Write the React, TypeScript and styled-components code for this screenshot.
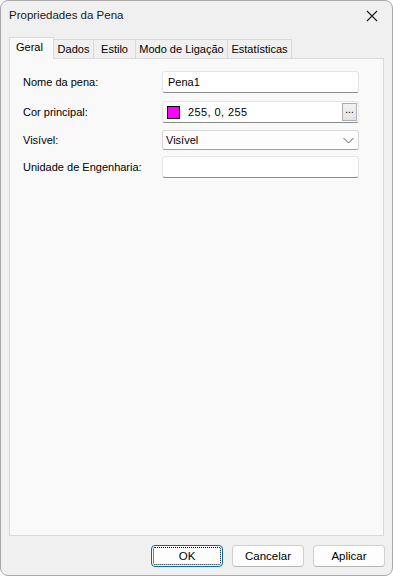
import React, { useState } from 'react';
import styled, { createGlobalStyle, css } from 'styled-components';

const GlobalStyle = createGlobalStyle`
  html, body {
    margin: 0;
    padding: 0;
    background: #ffffff;
  }
  body {
    font-family: 'Liberation Sans', Arial, sans-serif;
    font-size: 11px;
    color: #000000;
  }
`;

const DialogWindow = styled.div`
  box-sizing: border-box;
  width: 393px;
  height: 576px;
  display: flex;
  flex-direction: column;
  background: #f0f0f0;
  border: 1px solid #a8a8a8;
  border-radius: 8px;
  overflow: hidden;
`;

const TitleBar = styled.div`
  height: 29px;
  display: flex;
  align-items: center;
  justify-content: space-between;
  padding: 0 8px 0 8px;
  flex-shrink: 0;
`;

const Title = styled.span`
  font-size: 11.5px;
  color: #1a1a1a;
  margin-top: -1px;
`;

const CloseButton = styled.button`
  width: 20px;
  height: 20px;
  border: none;
  background: transparent;
  padding: 0;
  display: flex;
  align-items: center;
  justify-content: center;
  margin-right: 2px;
`;

const TabStrip = styled.div`
  display: flex;
  align-items: flex-end;
  height: 21px;
  margin: 7px 0 0 8px;
  flex-shrink: 0;
`;

const Tab = styled.div<{ $active?: boolean; $w: number }>`
  box-sizing: border-box;
  width: ${(p) => p.$w}px;
  height: 19px;
  display: flex;
  align-items: center;
  justify-content: center;
  border: 1px solid #d9d9d9;
  border-bottom: none;
  margin-right: -1px;
  background: #f0f0f0;
  color: #000000;
  white-space: nowrap;
  ${(p) =>
    p.$active &&
    css`
      justify-content: flex-start;
      padding: 0 0 3px 6px;
      background: #f9f9f9;
      position: relative;
      z-index: 1;
      margin-bottom: -1px;
      height: 22px;
    `}
`;

const Panel = styled.div`
  flex: 1;
  margin: 0 8px;
  background: #f9f9f9;
  border: 1px solid #d9d9d9;
  padding: 12px 13px 0 13px;
  display: flex;
  flex-direction: column;
`;

const Row = styled.div<{ $height: number; $gap: number }>`
  display: grid;
  grid-template-columns: 139px 197px;
  align-items: center;
  height: ${(p) => p.$height}px;
  margin-bottom: ${(p) => p.$gap}px;
`;

const Label = styled.label`
  color: #000000;
`;

const fieldBase = css`
  box-sizing: border-box;
  height: 100%;
  width: 100%;
  border: 1px solid #e5e5e5;
  border-bottom: 1px solid #8a8a8a;
  border-radius: 3px;
  background: #ffffff;
  display: flex;
  align-items: center;
`;

const TextBox = styled.div`
  ${fieldBase}
  padding: 0 5px;
`;

const ColourBox = styled.div`
  ${fieldBase}
  padding: 0 0 0 4px;
`;

const Swatch = styled.span<{ $colour: string }>`
  box-sizing: border-box;
  width: 13px;
  height: 13px;
  border: 1px solid #000000;
  background: ${(p) => p.$colour};
  margin-right: 8px;
  flex-shrink: 0;
`;

const ColourText = styled.span`
  flex: 1;
  letter-spacing: 0.4px;
`;

const EllipsisButton = styled.button`
  box-sizing: border-box;
  width: 15px;
  height: 18px;
  margin-right: 1px;
  padding: 0 0 4px 0;
  border: 1px solid #adadad;
  background: linear-gradient(#f2f2f2, #e3e3e3);
  font-family: inherit;
  font-size: 10px;
  line-height: 1;
  color: #000;
  display: flex;
  align-items: center;
  justify-content: center;
`;

const SelectBox = styled.div`
  ${fieldBase}
  background: #fdfdfd;
  border: 1px solid #d6d6d6;
  border-bottom: 1px solid #a0a0a0;
  padding: 0 4px 0 3px;
  justify-content: space-between;
`;

const Footer = styled.div`
  height: 38px;
  display: flex;
  align-items: center;
  justify-content: flex-end;
  gap: 9px;
  padding: 1px 7px 0 0;
  flex-shrink: 0;
`;

const DialogButton = styled.button<{ $default?: boolean }>`
  box-sizing: border-box;
  width: 72px;
  height: 22px;
  border: 1px solid #d0d0d0;
  border-bottom-color: #b8b8b8;
  border-radius: 4px;
  background: #fdfdfd;
  font-family: inherit;
  font-size: 11.5px;
  color: #000000;
  padding: 0;
  position: relative;
  ${(p) =>
    p.$default &&
    css`
      border: 1px solid #0067c0;
      &::after {
        content: '';
        position: absolute;
        inset: 1px;
        border: 1px dotted #000000;
        border-radius: 2px;
      }
    `}
`;

const CloseIcon = () => (
  <svg width="12" height="12" viewBox="0 0 12 12">
    <path d="M1 1 L11 11 M11 1 L1 11" stroke="#1a1a1a" strokeWidth="1.1" fill="none" />
  </svg>
);

const Chevron = () => (
  <svg width="11" height="7" viewBox="0 0 11 7">
    <path d="M0.5 1 L5.5 6 L10.5 1" stroke="#606060" strokeWidth="1" fill="none" />
  </svg>
);

const tabs = [
  { name: 'Geral', w: 45 },
  { name: 'Dados', w: 41 },
  { name: 'Estilo', w: 43 },
  { name: 'Modo de Ligação', w: 93 },
  { name: 'Estatísticas', w: 65 },
];

const App: React.FC = () => {
  const [active, setActive] = useState('Geral');

  return (
    <>
      <GlobalStyle />
      <DialogWindow>
        <TitleBar>
          <Title>Propriedades da Pena</Title>
          <CloseButton aria-label="Fechar">
            <CloseIcon />
          </CloseButton>
        </TitleBar>
        <TabStrip>
          {tabs.map((t) => (
            <Tab key={t.name} $w={t.w} $active={t.name === active} onClick={() => setActive(t.name)}>
              {t.name}
            </Tab>
          ))}
        </TabStrip>
        <Panel>
          <Row $height={22} $gap={8}>
            <Label>Nome da pena:</Label>
            <TextBox>Pena1</TextBox>
          </Row>
          <Row $height={22} $gap={7}>
            <Label>Cor principal:</Label>
            <ColourBox>
              <Swatch $colour="#ff00ff" />
              <ColourText>255, 0, 255</ColourText>
              <EllipsisButton>...</EllipsisButton>
            </ColourBox>
          </Row>
          <Row $height={20} $gap={6}>
            <Label>Visível:</Label>
            <SelectBox>
              <span>Visível</span>
              <Chevron />
            </SelectBox>
          </Row>
          <Row $height={22} $gap={0}>
            <Label>Unidade de Engenharia:</Label>
            <TextBox />
          </Row>
        </Panel>
        <Footer>
          <DialogButton $default>OK</DialogButton>
          <DialogButton>Cancelar</DialogButton>
          <DialogButton>Aplicar</DialogButton>
        </Footer>
      </DialogWindow>
    </>
  );
};

export default App;
